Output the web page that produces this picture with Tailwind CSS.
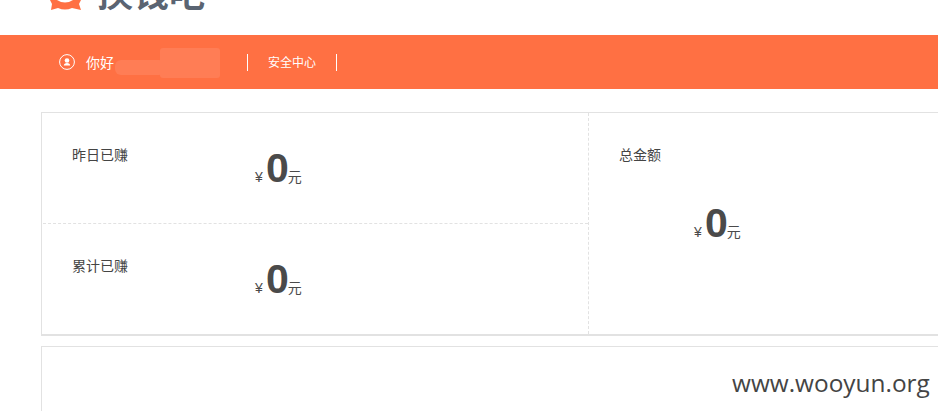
<!DOCTYPE html>
<html lang="zh">
<head>
<meta charset="utf-8">
<script src="https://cdn.jsdelivr.net/npm/@tailwindcss/browser@4"></script>
</head>
<body class="bg-white overflow-hidden font-['Noto_Sans_CJK_SC','Liberation_Sans',sans-serif]">
<div class="w-[938px] h-[411px] overflow-hidden relative">
  <header class="h-[35px] overflow-hidden relative">
    <svg class="absolute left-[48px] top-0" width="36" height="11" viewBox="0 0 36 11"><path d="M2 0 L9 0 Q17 5 25 0 L33 0 L31 4 L33 10 L24 8 Q17 11 10 8 L3 10 L4 4 Z" fill="#ff7043"/></svg>
    <div class="absolute left-[97px] top-[-27px] text-[36px] leading-[36px] font-bold text-[#5a6472] whitespace-nowrap">换钱吧</div>
  </header>
  <nav class="h-[54px] bg-[#ff7043] flex items-center text-white pl-[59px] relative">
    <svg width="16" height="16" viewBox="0 0 16 16" fill="none"><circle cx="8" cy="8" r="7.4" stroke="#fff"/><circle cx="8" cy="6.5" r="2.3" fill="#fff"/><path d="M4.8 11.5 Q5 9 8 9 Q11 9 11.2 11.5 Z" fill="#fff"/></svg>
    <span class="ml-[11px] text-[14px] w-[161px]">你好</span>
    <span class="w-px h-[17px] bg-white"></span>
    <span class="ml-5 text-[12px] w-[68px]">安全中心</span>
    <span class="w-px h-[17px] bg-white"></span>
    <div class="absolute left-[115px] top-[25px] w-[50px] h-[15px] bg-[#ff7d55] rounded-[6px]"></div>
    <div class="absolute left-[160px] top-[13px] w-[60px] h-[30px] bg-[#ff7d55] rounded-[3px]"></div>
  </nav>
  <main class="pl-[41px] pt-[23px]">
    <section class="h-[224px] w-[1000px] border border-b-2 border-[#e2e2e2] flex">
      <div class="w-[547px] border-r border-dashed border-[#e2e2e2] flex flex-col">
        <div class="h-[111px] border-b border-dashed border-[#e2e2e2] flex ml-[1px] relative">
          <span class="ml-[29px] mt-[32px] text-[14px] leading-[18px] text-[#444]">昨日已赚</span>
          <div class="absolute left-[212px] top-[28px] flex items-baseline text-[#4a4a4a] font-['Liberation_Sans']"><span class="text-[14px] w-[11px]">¥</span><b class="text-[41px] leading-[54px]">0</b><span class="text-[14px] -ml-px font-['Noto_Sans_CJK_SC']">元</span></div>
        </div>
        <div class="flex-1 flex ml-[1px] relative">
          <span class="ml-[29px] mt-[32px] text-[14px] leading-[18px] text-[#444]">累计已赚</span>
          <div class="absolute left-[212px] top-[28px] flex items-baseline text-[#4a4a4a] font-['Liberation_Sans']"><span class="text-[14px] w-[11px]">¥</span><b class="text-[41px] leading-[54px]">0</b><span class="text-[14px] -ml-px font-['Noto_Sans_CJK_SC']">元</span></div>
        </div>
      </div>
      <div class="flex-1 relative">
        <span class="absolute left-[30px] top-[32px] text-[14px] leading-[18px] text-[#444]">总金额</span>
        <div class="absolute left-[105px] top-[83px] flex items-baseline text-[#4a4a4a] font-['Liberation_Sans']"><span class="text-[14px] w-[11px]">¥</span><b class="text-[41px] leading-[54px]">0</b><span class="text-[14px] -ml-px font-['Noto_Sans_CJK_SC']">元</span></div>
      </div>
    </section>
    <section class="mt-[10px] h-[100px] w-[1000px] border border-[#e2e2e2]"></section>
  </main>
  <div class="absolute left-[732px] top-[367px] text-[24.4px] leading-[32px] text-[#444] font-['Open_Sans']">www.wooyun.org</div>
</div>
</body>
</html>
